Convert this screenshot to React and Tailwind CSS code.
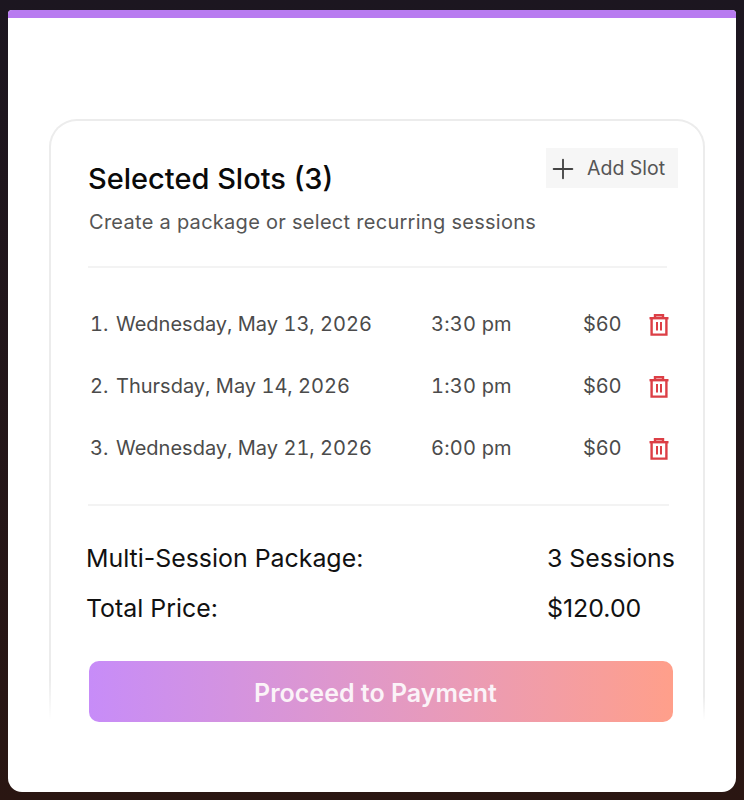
import { Plus } from "lucide-react";

const slots = [
  { num: "1.", date: "Wednesday, May 13, 2026", time: "3:30 pm", price: "$60" },
  { num: "2.", date: "Thursday, May 14, 2026", time: "1:30 pm", price: "$60" },
  { num: "3.", date: "Wednesday, May 21, 2026", time: "6:00 pm", price: "$60" },
];

function TrashIcon() {
  return (
    <svg viewBox="0 0 20 22" className="mt-[2px] h-[22px] w-5 text-[#dc3f46]" fill="none" stroke="currentColor" strokeWidth="2.4">
      <path d="M0.5 4.2H19.5" />
      <path d="M6 4V1.3H14V4" />
      <path d="M2.6 4.2V20.6H17.4V4.2" />
      <path d="M8 8V16.6" strokeWidth="2" />
      <path d="M12 8V16.6" strokeWidth="2" />
    </svg>
  );
}

function SlotRow({ slot }) {
  return (
    <div className="flex h-[62px] items-center text-[20px] tracking-[0.2px] text-[#4b4b4b]">
      <span className="flex w-[343px] pl-[2px] tracking-normal tabular-nums">
        <span className="w-[26px]">{slot.num}</span>
        {slot.date}
      </span>
      <span className="w-[152px] tabular-nums">{slot.time}</span>
      <span className="w-[66px]">{slot.price}</span>
      <TrashIcon />
    </div>
  );
}

export default function App() {
  return (
    <div className="h-[800px] w-[744px] bg-gradient-to-b from-[#1c1620] to-[#2a1612] px-2 pt-[10px] pb-2 font-['Inter',sans-serif]">
      <div className="h-[782px] overflow-hidden rounded-b-[14px] rounded-t-[4px] bg-white">
        <div className="h-2 bg-[#b87bf0]" />
        <div className="px-[41px] pt-[101px]">
          <div className="relative h-[601px] w-[656px] rounded-t-[28px] border-x-2 border-t-2 border-[#ececec] pl-[37px] pr-[25px] pt-[27px]">
            <div className="flex items-start justify-between">
              <h2 className="pt-[13px] text-[29px] leading-[36px] font-medium text-[#0a0a0a]">
                Selected Slots (3)
              </h2>
              <button className="flex h-10 w-[132px] items-center gap-2 bg-[#f6f6f6] pt-[2px] pl-px text-[19.5px] text-[#555555]">
                <Plus className="h-8 w-8 text-[#444444]" strokeWidth={1.4} />
                Add Slot
              </button>
            </div>
            <p className="mt-[11px] pl-px text-[20px] leading-7 tracking-[0.28px] text-[#555555]">
              Create a package or select recurring sessions
            </p>
            <div className="mt-[30px] mr-[11px] border-t-2 border-[#f3f3f3]" />
            <div className="mt-[25px]">
              {slots.map((slot) => (
                <SlotRow key={slot.num} slot={slot} />
              ))}
            </div>
            <div className="mt-[25px] mr-[9px] border-t-2 border-[#f3f3f3]" />
            <div className="mt-[28px] -ml-[2px] flex h-[50px] items-center text-[24.9px] text-[#111111]">
              <span className="w-[461px]">Multi-Session Package:</span>
              <span>3 Sessions</span>
            </div>
            <div className="-ml-[2px] flex h-[50px] items-center text-[24.9px] text-[#111111]">
              <span className="w-[461px]">Total Price:</span>
              <span>$120.00</span>
            </div>
            <button className="mt-[27px] ml-px h-[61px] w-[584px] rounded-[10px] bg-gradient-to-r from-[#c78cf8] to-[#ff9f8a] pt-[4px] pr-[11px] text-[25px] font-semibold text-[#fbf3f8]">
              Proceed to Payment
            </button>
            {/* the card's side lines fade out near the bottom */}
            <div className="absolute -left-[2px] bottom-0 h-[40px] w-[2px] bg-gradient-to-b from-transparent to-white" />
            <div className="absolute -right-[2px] bottom-0 h-[24px] w-[2px] bg-gradient-to-b from-transparent to-white" />
          </div>
        </div>
      </div>
    </div>
  );
}
